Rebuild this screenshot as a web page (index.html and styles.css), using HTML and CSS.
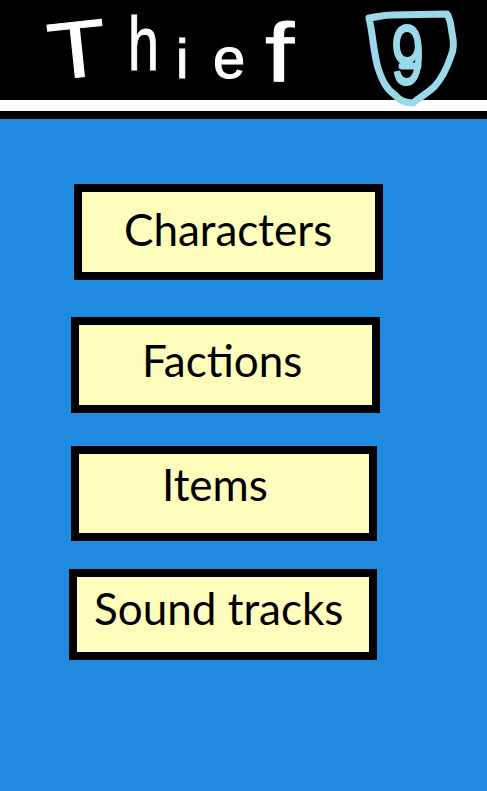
FILE: index.html
```html
<!DOCTYPE html>
<html lang='en'><head>
<meta charset='utf-8' />
<meta name='viewport' content='width=device-width, initial-scale=1' />
<title>Thief</title>
<link rel="stylesheet" href="styles.css">
</head><body>

<header class='top_bar'>
	<h1 class='title'><span class='l_t'>T</span><span class='l_h'>h</span><span class='l_i'>i</span><span class='l_e'>e</span><span class='l_f'>f</span></h1>
	<div class='white_line'></div>
	<svg class='shield' width='100' height='119' viewBox='360 0 100 119'>
		<path class='shield_line' d='M369 18 C378 17 383 15 392 15 L447 14 C451 20 451 27 452 33 C454 42 454 50 451 56 C447 68 442 78 435 86 C428 93 420 97 413 103 C406 103 399 100 395 95 C386 89 382 80 378 68 C373 50 373 34 369 18 Z'/>
		<path class='shield_line' d='M402 66 L418 66'/>
		<text class='shield_num' transform='translate(391 84) scale(.7 1)'>9</text>
	</svg>
</header>

<nav class='menu'>
	<a class='menu_btn btn_characters' href='#'>Characters</a>
	<a class='menu_btn btn_factions' href='#'>Factions</a>
	<a class='menu_btn btn_items' href='#'>Items</a>
	<a class='menu_btn btn_sound' href='#'>Sound tracks</a>
</nav>

</body></html>
```

FILE: styles.css
```css
:root {
	--blue   : #1f8adf;
	--cream  : #fffdbb;
	--shield : #99d9ea;
}
html, body {
	margin : 0;
	height : 100%;
}
body {
	background-color : var(--blue);
	font-family      : Lato, "Noto Sans", sans-serif;
	overflow         : hidden;
}
.top_bar {
	position         : relative;
	height           : 119px;
	background-color : #000;
}
.white_line {
	height           : 11px;
	background-color : #fff;
}

/* hand drawn title: every letter gets its own advance and stretch */
.title {
	height             : 100px;
	margin             : 0;
	padding-left       : 46px;
	box-sizing         : border-box;
	color              : #fff;
	font-family        : "Liberation Sans", sans-serif;
	font-size          : 76px;
	font-weight        : normal;
	line-height        : 100px;
	white-space        : nowrap;
	-webkit-text-stroke: 1px #fff;
}
.title span {
	display          : inline-block;
	line-height      : 1;
	transform-origin : left bottom;
}
.l_t {
	width        : 50px;
	margin-right : 34px;
	font-size    : 80px;
	transform    : translate(6px, 4px) rotate(-6deg) scaleX(1.2);
}
.l_h {
	width     : 46px;
	transform : translate(-2px, -6px) scaleX(.73);
}
.l_i {
	width     : 37px;
	font-size : 56px;
	transform : translateY(2px);
}
.l_e {
	width     : 52px;
	font-size : 58px;
	transform : translateY(2px);
}
.l_f {
	font-size : 84px;
	transform : translateY(6px) scaleX(1.25);
}

.shield {
	position : absolute;
	top      : 0;
	left     : 360px;
}
.shield_line {
	fill            : none;
	stroke          : var(--shield);
	stroke-width    : 7px;
	stroke-linejoin : round;
	stroke-linecap  : round;
}
.shield_num {
	fill         : var(--shield);
	stroke       : var(--shield);
	stroke-width : 2px;
	font-family  : "Liberation Sans", sans-serif;
	font-size    : 85px;
}

.menu {
	display        : flex;
	flex-direction : column;
	align-items    : flex-start;
	padding-top    : 65px;
}
.menu_btn {
	display          : block;
	box-sizing       : border-box;
	border           : 8px solid #000;
	background-color : var(--cream);
	color            : #000;
	text-decoration  : none;
	font-size        : 44px;
	line-height      : 48px;
}
.btn_characters {
	width       : 309px;
	height      : 96px;
	margin-left : 74px;
	padding     : 13px 0 0 42px;
}
.btn_factions {
	width       : 309px;
	height      : 96px;
	margin-left : 71px;
	margin-top  : 37px;
	padding     : 11px 0 0 63px;
}
.btn_items {
	width       : 306px;
	height      : 95px;
	margin-left : 71px;
	margin-top  : 33px;
	padding     : 6px 0 0 83px;
}
.btn_sound {
	width       : 308px;
	height      : 91px;
	margin-left : 69px;
	margin-top  : 28px;
	padding     : 7px 0 0 17px;
}
```
